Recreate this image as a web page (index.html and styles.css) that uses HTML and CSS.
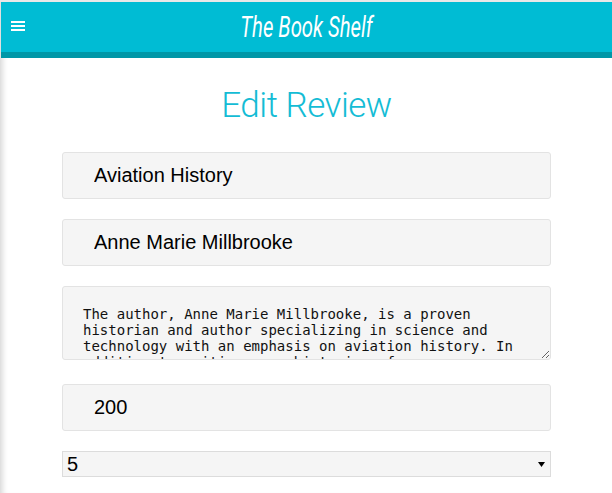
FILE: index.html
```html
<!DOCTYPE html>
<html>
<head>
<meta charset="utf-8">
<link rel="stylesheet" href="styles.css">
</head>
<body>
<div class="page">
  <header class="topbar">
    <div class="bar">
      <button class="menu" aria-label="menu">
        <svg width="14" height="12" viewBox="0 0 14 12"><rect x="0" y="1" width="14" height="2" fill="#fff"/><rect x="0" y="5" width="14" height="2" fill="#fff"/><rect x="0" y="9" width="14" height="2" fill="#fff"/></svg>
      </button>
      <h1 class="brand"><span>The Book Shelf</span></h1>
    </div>
    <div class="band"></div>
  </header>
  <main class="content">
    <h2 class="heading">Edit Review</h2>
    <form class="form">
      <input class="field" type="text" value="Aviation History">
      <input class="field" type="text" value="Anne Marie Millbrooke">
      <textarea class="area">The author, Anne Marie Millbrooke, is a proven historian and author specializing in science and technology with an emphasis on aviation history. In addition to writing many histories of aerospace companies, she has taught history.</textarea>
      <input class="field num" type="text" value="200">
      <select class="pick">
        <option>5</option>
      </select>
    </form>
  </main>
</div>
</body>
</html>
```
FILE: styles.css
```css
html, body {
  margin: 0;
  padding: 0;
  background: #fff;
}
.page {
  border-top: 2px solid #e8e8e8;
  min-height: 491px;
  box-shadow: inset 7px 0 6px -5px rgba(0,0,0,0.18);
}
.topbar {
  margin-left: 1px;
}
.bar {
  height: 50px;
  background: #00bcd4;
  display: flex;
  align-items: center;
  position: relative;
}
.band {
  height: 6px;
  background: #0097a7;
}
.menu {
  background: none;
  border: 0;
  padding: 0;
  margin-left: 10px;
  margin-top: -2px;
  display: flex;
  width: 14px;
  height: 12px;
}
.brand {
  flex: 1;
  margin: 0 24px 0 0;
  text-align: center;
  font-family: Roboto, "Liberation Sans", sans-serif;
  font-style: italic;
  font-weight: 400;
  font-size: 29px;
  color: #fff;
  line-height: 50px;
}
.brand span {
  display: inline-block;
  transform: scaleX(0.7);
}
.content {
  padding: 0 61px 0 62px;
}
.heading {
  margin: 26px 0 24px;
  text-align: center;
  font-family: Roboto, "Liberation Sans", sans-serif;
  font-weight: 300;
  font-size: 35px;
  letter-spacing: -0.5px;
  line-height: 44px;
  color: #14bcd5;
}
.form {
  display: flex;
  flex-direction: column;
}
.field {
  box-sizing: border-box;
  height: 47px;
  border: 1px solid #e3e3e3;
  border-radius: 3px;
  background: #f5f5f5;
  padding: 0 20px 0 31px;
  font-family: "Liberation Sans", Arial, sans-serif;
  font-size: 20px;
  color: #000;
  margin: 0 0 20px;
  outline: none;
}
.area {
  box-sizing: border-box;
  height: 74px;
  border: 1px solid #e3e3e3;
  border-radius: 3px;
  background: #f5f5f5;
  padding: 19px 20px 4px 20px;
  font-family: "DejaVu Sans Mono", monospace;
  font-size: 14px;
  line-height: 16px;
  color: #111;
  margin: 0 0 24px;
  resize: vertical;
  overflow: hidden;
}
.num {
  margin-bottom: 20px;
}
.pick {
  box-sizing: border-box;
  -webkit-appearance: none;
  appearance: none;
  height: 26px;
  border: 1px solid #dcdcdc;
  border-radius: 0;
  background-color: #f5f5f5;
  background-image: url("data:image/svg+xml,%3Csvg xmlns='http://www.w3.org/2000/svg' width='7' height='5' viewBox='0 0 7 5'%3E%3Cpath d='M0 0h7L3.5 5z' fill='%23000'/%3E%3C/svg%3E");
  background-repeat: no-repeat;
  background-position: right 5px center;
  font-family: "Liberation Sans", Arial, sans-serif;
  font-size: 20px;
  color: #000;
  padding: 0 4px;
}
```
